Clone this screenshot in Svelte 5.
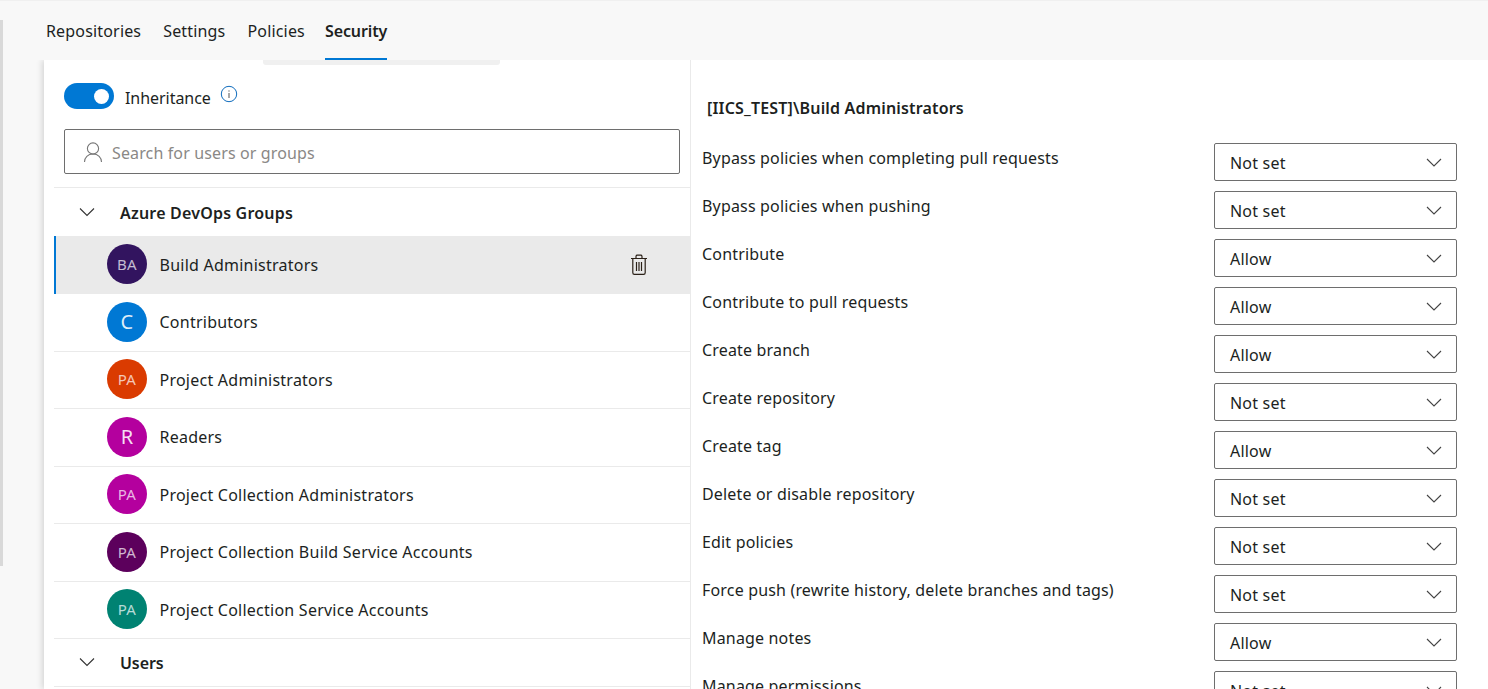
<script>
  const tabs = ["Repositories", "Settings", "Policies", "Security"];
  const groups = [
    { name: "Build Administrators", initials: "BA", color: "#32145f", selected: true },
    { name: "Contributors", initials: "C", color: "#0078d4", big: true },
    { name: "Project Administrators", initials: "PA", color: "#da3b01" },
    { name: "Readers", initials: "R", color: "#b4009e", big: true },
    { name: "Project Collection Administrators", initials: "PA", color: "#b4009e" },
    { name: "Project Collection Build Service Accounts", initials: "PA", color: "#5c005c" },
    { name: "Project Collection Service Accounts", initials: "PA", color: "#008272" }
  ];
  const permissions = [
    ["Bypass policies when completing pull requests", "Not set"],
    ["Bypass policies when pushing", "Not set"],
    ["Contribute", "Allow"],
    ["Contribute to pull requests", "Allow"],
    ["Create branch", "Allow"],
    ["Create repository", "Not set"],
    ["Create tag", "Allow"],
    ["Delete or disable repository", "Not set"],
    ["Edit policies", "Not set"],
    ["Force push (rewrite history, delete branches and tags)", "Not set"],
    ["Manage notes", "Allow"],
    ["Manage permissions", "Not set"]
  ];
</script>

<div class="page">
  <div class="rail"></div>
  <nav class="tabs">
    {#each tabs as tab}
      <span class="tab" class:active={tab === "Security"}>{tab}</span>
    {/each}
  </nav>
  <div class="body">
    <div class="panel">
      <div class="stub"></div>
      <section class="left">
        <div class="inherit">
          <span class="toggle"><span class="knob"></span></span>
          <span class="inherit-label">Inheritance</span>
          <svg class="info" width="18" height="18" viewBox="0 0 18 18" fill="none">
            <circle cx="9" cy="9" r="7.7" stroke="#0f6cbd" stroke-width="1"/>
            <rect x="8.5" y="8" width="1" height="5" fill="#555"/>
            <rect x="8.5" y="5.4" width="1" height="1.2" fill="#555"/>
          </svg>
        </div>
        <div class="search">
          <svg width="20" height="22" viewBox="0 0 20 22" fill="none" stroke="#777" stroke-width="1.1">
            <circle cx="10" cy="7.5" r="5.6"/>
            <path d="M1.500 21c0-4.600 3.400-8 8.500-8s8.500 3.400 8.500 8"/>
          </svg>
          <span class="placeholder">Search for users or groups</span>
        </div>
        <div class="group-head first">
          <svg class="caret" width="16" height="10" viewBox="0 0 16 10" fill="none" stroke="#333" stroke-width="1.1">
            <path d="M1 1.500l7 7 7-7"/>
          </svg>
          <span>Azure DevOps Groups</span>
        </div>
        {#each groups as g}
          <div class="member" class:selected={g.selected}>
            <span class="avatar" class:big={g.big} style="background: {g.color}">{g.initials}</span>
            <span class="name">{g.name}</span>
            {#if g.selected}
              <svg class="trash" width="18" height="22" viewBox="0 0 18 22" fill="none" stroke="#2b2118" stroke-width="1.200">
                <path d="M1 4.500h16M6 4.500V2.500c0-.8.500-1.300 1.300-1.300h3.400c.8 0 1.300.5 1.300 1.300v2"/>
                <path d="M2.800 4.500v14.200c0 1 .6 1.600 1.600 1.600h9.200c1 0 1.600-.6 1.600-1.600V4.500"/>
                <path d="M6.500 8v9M9 8v9M11.500 8v9"/>
              </svg>
            {/if}
          </div>
        {/each}
        <div class="group-head last">
          <svg class="caret" width="16" height="10" viewBox="0 0 16 10" fill="none" stroke="#333" stroke-width="1.1">
            <path d="M1 1.500l7 7 7-7"/>
          </svg>
          <span>Users</span>
        </div>
      </section>
      <section class="right">
        <h2>[IICS_TEST]\Build Administrators</h2>
        {#each permissions as p}
          <div class="perm">
            <span class="perm-label">{p[0]}</span>
            <div class="select">
              <span class="value">{p[1]}</span>
              <svg width="16" height="9" viewBox="0 0 16 9" fill="none" stroke="#444" stroke-width="1.1">
                <path d="M1 1l7 7 7-7"/>
              </svg>
            </div>
          </div>
        {/each}
      </section>
    </div>
  </div>
</div>

<style>
  :global(body) {
    margin: 0;
    background: #f8f8f8;
  }
  .page {
    position: relative;
    height: 689px;
    overflow: hidden;
    font-family: "Noto Sans", "Open Sans", sans-serif;
    font-size: 16px;
    color: #201f1e;
    background: #f8f8f8;
  }
  .rail {
    position: absolute;
    z-index: 2;
    left: 0;
    top: 20px;
    width: 3px;
    height: 546px;
    background: #d9d9d9;
  }
  .tabs {
    position: relative;
    z-index: 1;
    height: 60px;
    box-sizing: border-box;
    padding-left: 46px;
    display: flex;
    gap: 22px;
    border-top: 1px solid #f0f0f0;
    background: #f8f8f8;
  }
  .tab {
    height: 59px;
    box-sizing: border-box;
    line-height: 60px;
    border-bottom: 2px solid transparent;
    letter-spacing: 0.17px;
  }
  .tab.active {
    margin-left: -2px;
    font-weight: 600;
    border-bottom-color: #0078d4;
    letter-spacing: -0.1px;
  }
  .body {
    padding-left: 44px;
  }
  .panel {
    position: relative;
    display: flex;
    height: 629px;
    background: #fff;
    box-shadow: -2px 0 6px rgba(0, 0, 0, 0.14);
  }
  .stub {
    position: absolute;
    left: 219px;
    top: 0;
    width: 237px;
    height: 5px;
    background: #f0f0f0;
    border-radius: 0 0 3px 3px;
  }
  .left {
    width: 647px;
    box-sizing: border-box;
    padding: 23px 0 0 10px;
    border-right: 1px solid #eaeaea;
    flex: none;
  }
  .inherit {
    display: flex;
    height: 26px;
    margin-left: 10px;
    align-items: center;
  }
  .toggle {
    width: 50px;
    height: 26px;
    border-radius: 13px;
    background: #0078d4;
    position: relative;
  }
  .knob {
    position: absolute;
    right: 5px;
    top: 5.500px;
    width: 15px;
    height: 15px;
    border-radius: 50%;
    background: #fff;
  }
  .inherit-label {
    margin-left: 11px;
    letter-spacing: -0.05px;
    padding-top: 3px;
  }
  .info {
    margin-left: 9px;
    margin-top: -5px;
  }
  .search {
    margin: 20px 10px 0 10px;
    height: 45px;
    box-sizing: border-box;
    border: 1px solid #6e6e6e;
    border-radius: 2px;
    display: flex;
    align-items: center;
    padding-left: 18px;
    color: #8a8886;
    gap: 9px;
  }
  .placeholder {
    letter-spacing: 0.13px;
    padding-top: 2px;
  }
  .group-head {
    height: 48px;
    box-sizing: border-box;
    display: flex;
    align-items: center;
    font-weight: 600;
    padding-left: 25px;
    border-bottom: 1px solid #eaeaea;
    letter-spacing: 0.2px;
  }
  .group-head span {
    padding-top: 2px;
  }
  .group-head.first {
    margin-top: 13px;
    height: 49px;
    border-top: 1px solid #eaeaea;
    border-bottom: none;
  }
  .group-head.last {
    height: 47.500px;
    letter-spacing: -0.1px;
  }
  .caret {
    margin-right: 25px;
  }
  .member {
    height: 57.500px;
    box-sizing: border-box;
    display: flex;
    align-items: center;
    padding-left: 53px;
    border-bottom: 1px solid #eaeaea;
    letter-spacing: 0.24px;
  }
  .member.selected {
    height: 58px;
    background: #eaeaea;
    border-left: 2px solid #0078d4;
    border-bottom: none;
    padding-left: 51px;
  }
  .avatar {
    width: 40px;
    height: 40px;
    margin-bottom: 1.200px;
    border-radius: 50%;
    color: rgba(255, 255, 255, 0.72);
    display: flex;
    align-items: center;
    justify-content: center;
    font-size: 15px;
    flex: none;
    letter-spacing: 0.3px;
  }
  .avatar.big {
    font-size: 20px;
    color: rgba(255, 255, 255, 0.88);
  }
  .name {
    margin-left: 12.500px;
    flex: 1;
  }
  .trash {
    margin-right: 42px;
  }
  .right {
    flex: 1;
    padding-left: 11px;
  }
  h2 {
    margin: 36px 0 0 5px;
    height: 47px;
    font-size: 16px;
    line-height: 24px;
    font-weight: 600;
    letter-spacing: 0.17px;
  }
  .perm {
    height: 48px;
    display: flex;
    justify-content: space-between;
    padding-right: 31px;
  }
  .perm-label {
    line-height: 30px;
    letter-spacing: 0.17px;
  }
  .select {
    width: 243px;
    height: 38px;
    box-sizing: border-box;
    border: 1px solid #6e6e6e;
    border-radius: 2px;
    display: flex;
    align-items: center;
    justify-content: space-between;
    padding: 0 14px 0 15px;
    letter-spacing: 0.2px;
  }
  .value {
    padding-top: 2px;
  }
</style>
